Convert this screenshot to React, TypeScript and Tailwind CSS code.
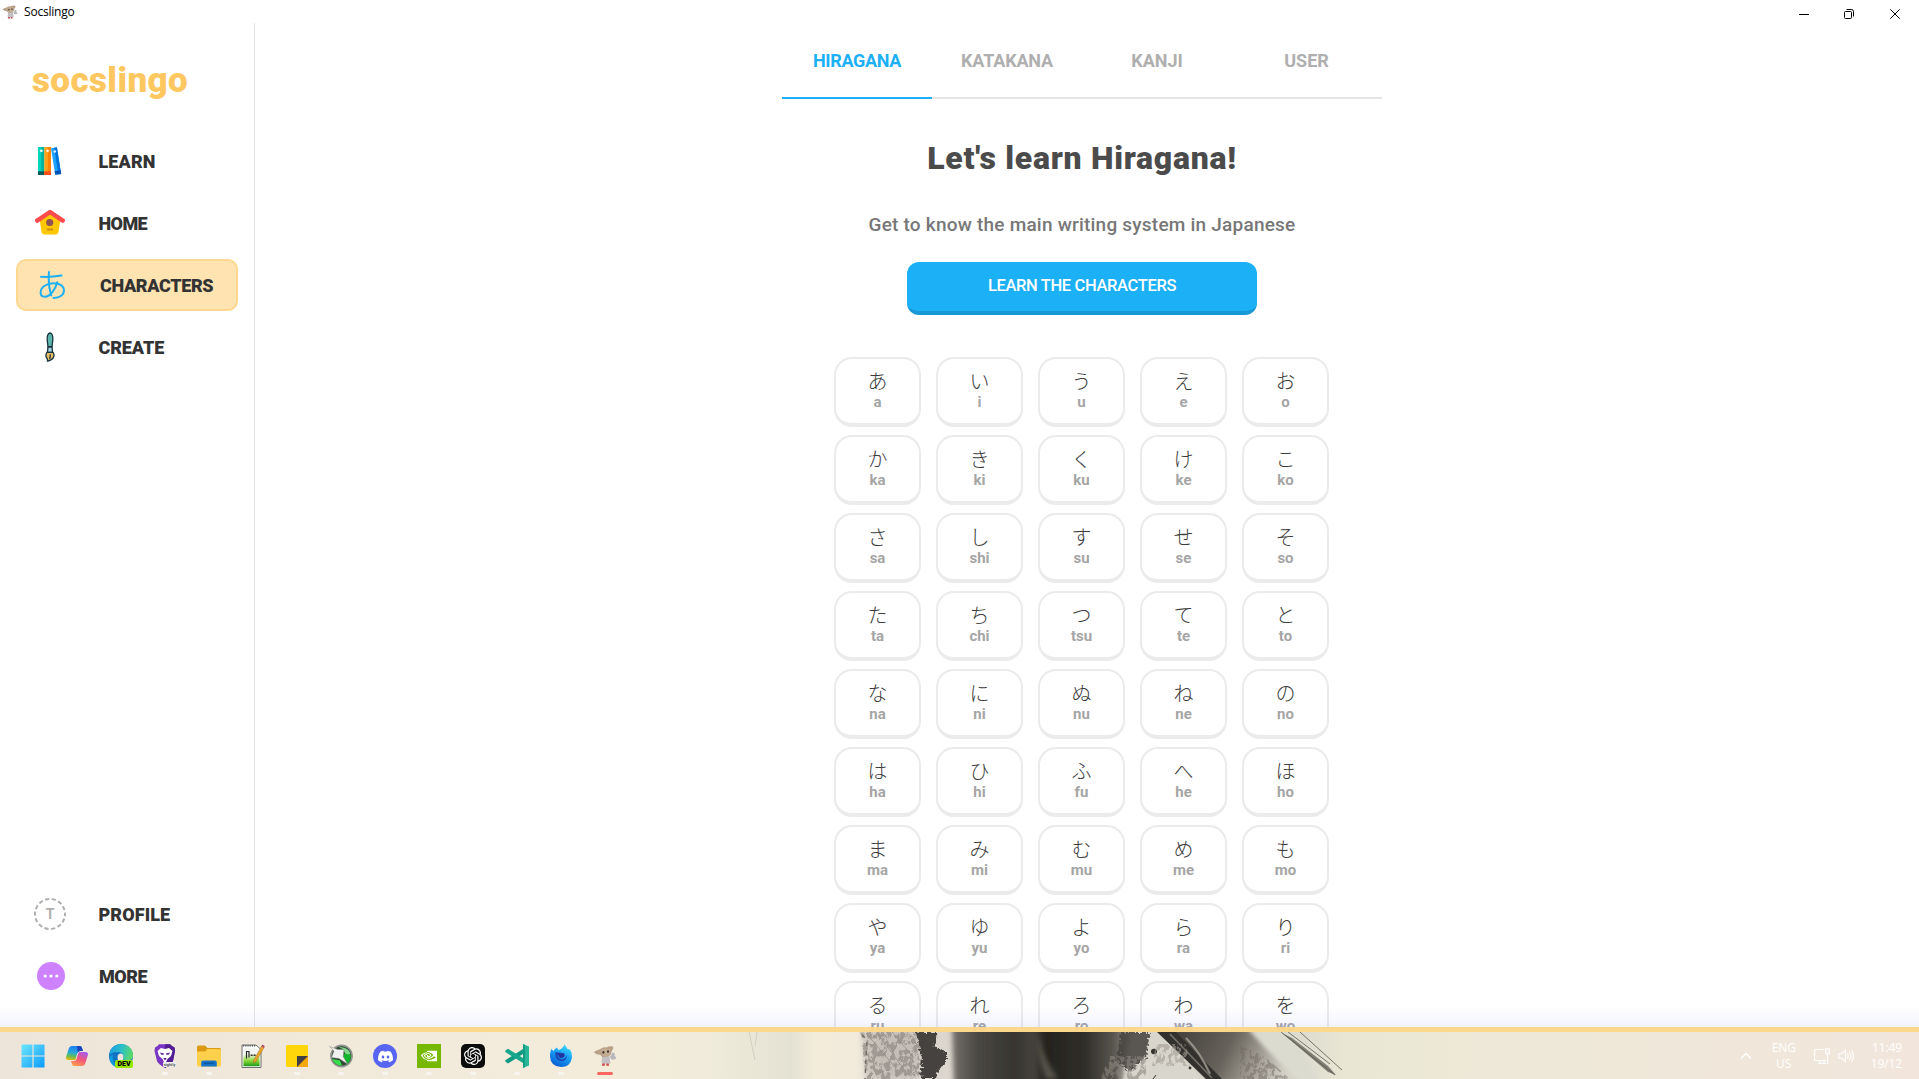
import React from "react";
import { SiDiscord, SiNvidia, SiOpenai } from "react-icons/si";

const kana: [string, string][] = [
  ["あ", "a"], ["い", "i"], ["う", "u"], ["え", "e"], ["お", "o"],
  ["か", "ka"], ["き", "ki"], ["く", "ku"], ["け", "ke"], ["こ", "ko"],
  ["さ", "sa"], ["し", "shi"], ["す", "su"], ["せ", "se"], ["そ", "so"],
  ["た", "ta"], ["ち", "chi"], ["つ", "tsu"], ["て", "te"], ["と", "to"],
  ["な", "na"], ["に", "ni"], ["ぬ", "nu"], ["ね", "ne"], ["の", "no"],
  ["は", "ha"], ["ひ", "hi"], ["ふ", "fu"], ["へ", "he"], ["ほ", "ho"],
  ["ま", "ma"], ["み", "mi"], ["む", "mu"], ["め", "me"], ["も", "mo"],
  ["や", "ya"], ["ゆ", "yu"], ["よ", "yo"], ["ら", "ra"], ["り", "ri"],
  ["る", "ru"], ["れ", "re"], ["ろ", "ro"], ["わ", "wa"], ["を", "wo"],
];

function Mascot({ className }: { className: string }) {
  return (
    <svg viewBox="0 0 24 24" className={className}>
      <path d="M9 12 L16.5 12 L17.5 19.8 L8.5 19.8Z" fill="#c2c0c2" />
      <path d="M0.8 8 Q3 6.5 7.5 5 Q9 3 13.5 3.4 Q16 1.6 20 2.6 Q21.2 4.2 19 6.5 L17.5 11 Q14 13.6 9 12.8 L7 10.6 Q3 11 0.8 8Z" fill="#b7a189" />
      <path d="M8 5.6 Q12 4 17.4 5.4 L17 10 Q13.5 12.8 9 11.6Z" fill="#c8ae90" />
      <ellipse cx="10.4" cy="8.4" rx="1" ry="1.4" fill="#34323a" />
      <ellipse cx="15" cy="7.6" rx="1" ry="1.4" fill="#34323a" />
      <path d="M17 13 L19.5 8.5 L22 9.5 L21.4 11.5 L23.4 14 L21.5 15.5 L18.5 15.5Z" fill="#b7b6bb" />
      <path d="M9.5 19.4 h2.4 v2.4 h-3.2z M13.3 19.4 h2.4 l.4 2.4 h-2.8z" fill="#d24a48" />
    </svg>
  );
}

function BooksIcon() {
  return (
    <svg viewBox="0 0 24 28" className="h-7 w-6">
      <rect x="0" y="0" width="6.3" height="28" fill="#00d6bd" />
      <rect x="3.2" y="0" width="3.1" height="28" fill="#00b3a0" />
      <rect x="0" y="24.3" width="6.3" height="3.7" fill="#045d5c" />
      <circle cx="3.4" cy="3.8" r="1.4" fill="#e8fffb" />
      <rect x="6.3" y="0" width="6.6" height="28" fill="#ffa31a" />
      <rect x="9.8" y="0" width="3.1" height="28" fill="#ff8300" />
      <rect x="6.3" y="24.3" width="6.6" height="3.7" fill="#ff4b14" />
      <circle cx="9.6" cy="3.8" r="1.4" fill="#fff1d8" />
      <g transform="translate(13 1.2) rotate(-9)">
        <rect width="6" height="27" fill="#1ea2ff" />
        <rect x="3.2" width="2.8" height="27" fill="#0074d9" />
        <rect y="23.4" width="6" height="3.6" fill="#0053b8" />
        <circle cx="3.2" cy="3.8" r="1.3" fill="#e4f4ff" />
      </g>
    </svg>
  );
}

function BirdhouseIcon() {
  return (
    <svg viewBox="0 0 30 26" className="relative -top-px h-[26px] w-[30px]">
      <path d="M4.5 9.5 L15 2.5 L25.5 9.5 L23.5 23 Q23.2 25.4 21 25.4 H9 Q6.8 25.4 6.5 23Z" fill="#ffc800" />
      <path d="M2.2 11.6 L15 3 L27.8 11.6" fill="none" stroke="#ff4b4b" strokeWidth="4.4" strokeLinecap="round" strokeLinejoin="round" />
      <circle cx="14.7" cy="13.5" r="3.6" fill="#8f5252" />
      <rect x="11.8" y="19.6" width="6.4" height="1.9" rx="0.8" fill="#cd8f15" />
    </svg>
  );
}

function AIcon() {
  return (
    <svg viewBox="0 0 26 28" className="h-7 w-[26px]" fill="none" stroke="#1cb0f6" strokeWidth="2" strokeLinecap="round">
      <path d="M2 5.8 Q12 6.3 22.5 4.6" />
      <path d="M10 1 Q8.8 14 12.3 24.5" />
      <path d="M18.2 11.3 C16.8 17 12 25.8 5.6 25.8 C2.8 25.8 1.6 24 1.6 21.6 C1.6 15.8 8 12.2 14.6 12.2 C21.5 12.2 25 15.6 25 19.2 C25 23.6 21 26.6 14.5 27" />
    </svg>
  );
}

function BrushIcon() {
  return (
    <svg viewBox="0 0 10 30" className="h-[30px] w-[10px]" stroke="#17323c" strokeWidth="1.3" strokeLinejoin="round">
      <path d="M5 0.8 Q8.2 1.5 7.8 8 L7 15 H3 L2.2 8 Q1.8 1.5 5 0.8Z" fill="#5bb5ac" />
      <path d="M3 15 H7 L7.6 20.5 H2.4Z" fill="#a8d8e8" />
      <path d="M2 20.4 H8 Q9.8 23 8.4 25.6 Q7 28 2.4 29.2 Q3 27.5 1.2 25 Q0.4 22 2 20.4Z" fill="#e5bc62" />
      <path d="M5.4 22.5 L4.8 27" fill="none" />
    </svg>
  );
}

function ProfileIcon() {
  return (
    <div className="relative flex size-8 items-center justify-center">
      <svg viewBox="0 0 32 32" className="absolute inset-0 size-8">
        <circle cx="16" cy="16" r="15" fill="none" stroke="#afafaf" strokeWidth="2" strokeDasharray="4.1 2.63" strokeDashoffset="2" />
      </svg>
      <span className="text-[14px] font-bold text-[#afafaf]">T</span>
    </div>
  );
}

function MoreIcon() {
  return (
    <svg viewBox="0 0 28 28" className="relative left-[0.5px] size-7">
      <circle cx="14" cy="14" r="14" fill="#ce82ff" />
      <g fill="#fff">
        <circle cx="8.2" cy="14" r="1.6" />
        <circle cx="14" cy="14" r="1.6" />
        <circle cx="19.8" cy="14" r="1.6" />
      </g>
    </svg>
  );
}

function NavItem({ icon, label, active, text }: { icon: React.ReactNode; label: string; active?: boolean; text: string }) {
  return (
    <div
      className={
        "flex h-[52px] w-[222px] items-center rounded-[10px] " +
        (active ? "border-2 border-[#ffd78e] bg-[#ffe3b1]" : "")
      }
    >
      <div className="flex w-[68px] justify-center">{icon}</div>
      <span className={"text-[18px] font-black text-[#333] " + text}>{label}</span>
    </div>
  );
}

function WindowControls() {
  return (
    <div className="flex items-center pr-[19px] pt-[5px]">
      <svg viewBox="0 0 10 10" className="mr-[35px] size-[10px]"><path d="M0 5.5H10" stroke="#000" /></svg>
      <svg viewBox="0 0 10 10" className="mr-9 size-[10px]" fill="none" stroke="#000">
        <rect x="0.5" y="2.5" width="7" height="7" rx="1" />
        <path d="M2.5 0.5 H7.5 Q9.5 0.5 9.5 2.5 V7.5" />
      </svg>
      <svg viewBox="0 0 10 10" className="size-[10px]"><path d="M0.3 0.3 L9.7 9.7 M9.7 0.3 L0.3 9.7" stroke="#000" /></svg>
    </div>
  );
}

function WindowsIcon() {
  return (
    <svg viewBox="0 0 24 24" className="relative -left-[0.5px] size-6">
      <defs>
        <linearGradient id="win" x1="0" y1="0" x2="1" y2="1">
          <stop offset="0" stopColor="#6fe6ff" />
          <stop offset="1" stopColor="#0a9bff" />
        </linearGradient>
      </defs>
      <path d="M0.5 0.5H11.4V11.4H0.5Z M12.6 0.5H23.5V11.4H12.6Z M0.5 12.6H11.4V23.5H0.5Z M12.6 12.6H23.5V23.5H12.6Z" fill="url(#win)" />
    </svg>
  );
}

function CopilotIcon() {
  return (
    <svg viewBox="0 0 24 24" className="size-6">
      <defs>
        <linearGradient id="cpA" x1="0.4" y1="0" x2="0.2" y2="1">
          <stop offset="0" stopColor="#1f7ff0" />
          <stop offset="0.45" stopColor="#26a8d8" />
          <stop offset="0.75" stopColor="#6cc04a" />
          <stop offset="1" stopColor="#f2b90c" />
        </linearGradient>
        <linearGradient id="cpB" x1="0.8" y1="0" x2="0.3" y2="1">
          <stop offset="0" stopColor="#a45cf5" />
          <stop offset="0.5" stopColor="#f0567c" />
          <stop offset="1" stopColor="#ff9a4a" />
        </linearGradient>
      </defs>
      <path d="M7 2 H15 Q16.5 2 17 4 L18 7 H15 Q13 7 12.3 9.5 L10.3 16 H3.5 Q0.2 16 1.2 12.5 L3.6 5 Q4.5 2 7 2Z" fill="url(#cpA)" />
      <path d="M17 22 H9 Q7.5 22 7 20 L6 17 H9 Q11 17 11.7 14.5 L13.7 8 H20.5 Q23.8 8 22.8 11.5 L20.4 19 Q19.5 22 17 22Z" fill="url(#cpB)" />
      <path d="M12 2 H15 Q16.5 2 17 4 L18 7 H15 Q13.5 7 12.7 8.6Z" fill="#1b45b8" />
    </svg>
  );
}

function EdgeIcon() {
  return (
    <div className="relative size-6">
      <svg viewBox="0 0 24 24" className="size-6">
        <defs>
          <linearGradient id="edgeTop" x1="0" y1="0.3" x2="1" y2="0.5">
            <stop offset="0" stopColor="#1b9de2" />
            <stop offset="0.5" stopColor="#2cc0c8" />
            <stop offset="1" stopColor="#5ddb62" />
          </linearGradient>
        </defs>
        <circle cx="12" cy="12" r="12" fill="#1273c4" />
        <path d="M0.2 11 C1 4 6 0 12 0 C19 0 24 5 24 11 C24 15 21 17 18 17 C15 17 13.5 16 14.3 14.4 C15.5 12 14 8.5 9.5 8 C5 7.5 1.5 9 0.2 11Z" fill="url(#edgeTop)" />
        <path d="M8.5 13 C8.5 10.5 10.5 9 12.5 9.6 C14.7 10.5 15 13 14 15 L13 20 C10.5 19 8.5 16.5 8.5 13Z" fill="#ece5da" />
        <path d="M4 10.5 Q2.5 18 9 23.5 Q3.5 22.5 1 17 Q-0.5 12 4 10.5Z" fill="#0f9bdc" />
      </svg>
      <span className="absolute top-[16px] left-[6px] flex h-2 w-[18px] items-center justify-center rounded-[2px] bg-[#99e600] text-[7px] font-black text-black">DEV</span>
    </div>
  );
}

function BraveIcon() {
  return (
    <div className="relative size-6">
      <svg viewBox="0 0 24 24" className="size-6">
        <path d="M6 0.3 H17 L19 2 L21.5 3.5 L22 7 L20 17 Q19 20 12 24 Q5 20 4 17 L1.5 7 L2 3.5 L4.5 2Z" fill="#7a35c4" />
        <path d="M12 0.3 H17 L19 2 L21.5 3.5 L22 7 L20 17 Q19 20 12 24Z" fill="#511f92" />
        <path d="M8 4 L12 5 L16 4 L19.5 7 L18 12 L14.5 15 L12 20 L9.5 15 L6 12 L4.5 7Z" fill="#fff" />
        <path d="M7 8.6 L11 9.5 L10.4 11 L8 10.6Z M17 8.6 L13 9.5 L13.6 11 L16 10.6Z M10.2 14 H13.8 L12 16.5Z" fill="#5b2499" />
      </svg>
      <span className="absolute top-[18px] left-[10px] flex h-[5px] w-[13px] items-center justify-center rounded-[1px] bg-[#eee] text-[3.8px] font-bold text-[#555]">nightly</span>
    </div>
  );
}

function FolderIcon() {
  return (
    <svg viewBox="0 0 24 24" className="size-6">
      <path d="M0 3 Q0 1.5 1.5 1.5 H8 L10.5 4 H22.5 Q24 4 24 5.5 V10 H0Z" fill="#dc9a14" />
      <path d="M0 7.5 H8 L10.5 5 H22.5 Q24 5 24 6.5 V21 Q24 22.5 22.5 22.5 H1.5 Q0 22.5 0 21Z" fill="#ffd04b" />
      <path d="M4.2 22.5 V18.5 Q4.2 16.4 6.3 16.4 H17.7 Q19.8 16.4 19.8 18.5 V22.5Z" fill="#1373c9" />
      <path d="M7 19.2 H17" stroke="#0a4f97" strokeWidth="1.2" />
    </svg>
  );
}

function NotepadIcon() {
  return (
    <svg viewBox="0 0 24 24" className="size-6">
      <defs>
        <linearGradient id="npp" x1="0" y1="0" x2="0" y2="1">
          <stop offset="0.35" stopColor="#f4f6f2" />
          <stop offset="0.7" stopColor="#8edb3a" />
          <stop offset="1" stopColor="#1f9a1a" />
        </linearGradient>
      </defs>
      <path d="M1 1 H15 L20 5.5 V23.5 H1Z" fill="#fff" stroke="#6b6f6b" />
      <path d="M2.4 3.5 H14 L18.6 7 V22.2 H2.4Z" fill="url(#npp)" />
      <path d="M2 1.8 H14.5" stroke="#555" strokeWidth="1.4" strokeDasharray="1.2 1" />
      <path d="M5.5 14.5 V7.5 H8 V13.5" fill="none" stroke="#2b2b2b" strokeWidth="1.2" />
      <path d="M9.6 11.2 H11.6 M12.6 11.2 H14.6" stroke="#2b2b2b" strokeWidth="1.4" />
      <path d="M21 1.5 L23.3 3 L15 17.5 L12.6 19 L12.8 16Z" fill="#eda72c" stroke="#9a6518" strokeWidth="0.5" />
      <path d="M20.4 2.4 L21.3 0.5 L23.7 2 L22.8 3.8Z" fill="#b3476a" />
    </svg>
  );
}

function StickyIcon() {
  return (
    <svg viewBox="0 0 24 24" className="size-6">
      <rect x="1" y="1" width="22" height="22" rx="1.2" fill="#ffd60a" />
      <path d="M12 12 H23 V21.8 Q23 23 21.8 23 H12Z" fill="#f5a70b" />
      <path d="M12 12 H23 L12 23Z" fill="#3f3f44" />
    </svg>
  );
}

function JetIcon() {
  return (
    <svg viewBox="0 0 24 24" className="size-6">
      <circle cx="12.5" cy="12" r="10.6" fill="#2f4a34" stroke="#90948f" strokeWidth="1.6" />
      <path d="M10 3.4 Q19 2.5 21.6 10 L17.5 12 L14 5Z" fill="#7fd98c" />
      <path d="M15.5 9.5 L22 11 Q22 17 18 20 L14 12Z" fill="#12b52c" />
      <path d="M3.2 15 Q6 21.5 13 21.6 L11 16.4Z" fill="#35e04c" />
      <path d="M0.5 2.5 L5 7 L2.5 13.5 L10 14.5 L18.5 20 L14.2 12.5 L15 5.5 L9 5.5Z" fill="#f1f1ef" stroke="#84857f" strokeWidth="0.5" />
    </svg>
  );
}

function DiscordIcon() {
  return (
    <div className="flex size-6 items-center justify-center rounded-full bg-[#5865f2]">
      <SiDiscord className="size-[15px] text-white" />
    </div>
  );
}

function NvidiaIcon() {
  return (
    <div className="flex size-6 items-center justify-center bg-[#76b900]">
      <SiNvidia className="size-4 text-white" />
    </div>
  );
}

function ChatIcon() {
  return (
    <div className="flex size-6 items-center justify-center rounded-[5px] bg-[#0c0c0d]">
      <SiOpenai className="size-[18px] text-white" />
    </div>
  );
}

function CodeIcon() {
  return (
    <svg viewBox="0 0 24 24" className="size-6">
      <path d="M18 0 L24 2.6 V21.4 L18 24Z" fill="#27b798" />
      <path d="M18 0 L20 1 V23 L18 24Z" fill="#109d84" />
      <path d="M18 5 V10 L3 19.5 L0.3 17.6 V16.2Z" fill="#0f9b83" />
      <path d="M18 19 V14 L3 4.7 L0.3 6.6 V8Z" fill="#16a78d" />
    </svg>
  );
}

function FirefoxIcon() {
  return (
    <svg viewBox="0 0 24 24" className="size-6">
      <defs>
        <linearGradient id="fx" x1="0.8" y1="0" x2="0.3" y2="1">
          <stop offset="0" stopColor="#3fe0ff" />
          <stop offset="0.5" stopColor="#159cf5" />
          <stop offset="1" stopColor="#0a5bd0" />
        </linearGradient>
      </defs>
      <path d="M1 10 L2.2 5 L4.6 7 Q5.6 4.5 8 3.5 L9.5 6 Q13 5 14 3 L15.5 0.4 Q17.5 3 18.5 5 L21 5.5 Q23.5 9 23 13.5 Q21.5 23 12 23 Q1.5 22.5 1 12.5Z" fill="url(#fx)" />
      <path d="M6.5 8 Q9 9 12.5 8.6 Q11 10.5 8.6 11.5 Q9.5 15 13 15.2 Q17 15 17.5 10.8 Q18.6 14.5 15 16.8 Q10 18 7.4 14.5 Q5.4 11.6 6.5 8Z" fill="#1c48b4" />
      <path d="M8 8.6 Q11 9.6 14.5 9 Q16.5 10.8 15.4 12.6 Q13 15 10.5 13.4Z" fill="#2233a0" />
    </svg>
  );
}

const apps: { icon: React.ReactNode; mark: "none" | "open" | "active" }[] = [
  { icon: <WindowsIcon />, mark: "none" },
  { icon: <CopilotIcon />, mark: "none" },
  { icon: <EdgeIcon />, mark: "none" },
  { icon: <BraveIcon />, mark: "open" },
  { icon: <FolderIcon />, mark: "open" },
  { icon: <NotepadIcon />, mark: "none" },
  { icon: <StickyIcon />, mark: "open" },
  { icon: <JetIcon />, mark: "open" },
  { icon: <DiscordIcon />, mark: "open" },
  { icon: <NvidiaIcon />, mark: "open" },
  { icon: <ChatIcon />, mark: "open" },
  { icon: <CodeIcon />, mark: "open" },
  { icon: <FirefoxIcon />, mark: "open" },
  { icon: <Mascot className="size-6" />, mark: "active" },
];

const markClass = {
  none: "h-[3px] w-[6px]",
  open: "h-[3px] w-[6px] rounded-full bg-[#f8f5f0]",
  active: "h-[3px] w-4 rounded-full bg-[#fa6560]",
};

// Ink-wash wallpaper showing through the translucent taskbar.
function Wallpaper() {
  return (
    <svg viewBox="0 0 800 47" className="absolute top-0 left-[600px] h-[47px] w-[800px]" preserveAspectRatio="none">
      <defs>
        <filter id="rough" x="-20%" y="-20%" width="140%" height="140%">
          <feTurbulence type="fractalNoise" baseFrequency="0.35" numOctaves="3" seed="7" />
          <feDisplacementMap in="SourceGraphic" scale="9" xChannelSelector="R" yChannelSelector="G" />
        </filter>
        <filter id="speckle" x="0" y="0" width="100%" height="100%">
          <feTurbulence type="fractalNoise" baseFrequency="0.22 0.16" numOctaves="4" seed="11" result="n" />
          <feColorMatrix in="n" type="matrix" values="0 0 0 0 0  0 0 0 0 0  0 0 0 0 0  0 0 0 -9 4.9" result="m" />
          <feComposite in="SourceGraphic" in2="m" operator="in" />
        </filter>
        <filter id="soft"><feGaussianBlur stdDeviation="2.5" /></filter>
        <linearGradient id="wash" x1="0" x2="1" y1="0" y2="0">
          <stop offset="0" stopColor="#f3ecdb" stopOpacity="0" />
          <stop offset="0.14" stopColor="#efebdb" />
          <stop offset="0.24" stopColor="#e4e2d3" />
          <stop offset="0.27" stopColor="#f3ecdb" />
          <stop offset="0.32" stopColor="#f2ebdc" />
          <stop offset="0.35" stopColor="#dcd6ce" />
          <stop offset="0.7" stopColor="#d8d5cc" />
          <stop offset="0.88" stopColor="#dddccf" />
          <stop offset="0.93" stopColor="#e9e6d3" />
          <stop offset="1" stopColor="#ece8d6" />
        </linearGradient>
        <linearGradient id="ink" x1="0" x2="1" y1="0" y2="0">
          <stop offset="0" stopColor="#77736d" />
          <stop offset="0.14" stopColor="#4a4843" />
          <stop offset="0.35" stopColor="#36342f" />
          <stop offset="0.45" stopColor="#46443d" />
          <stop offset="0.52" stopColor="#24221e" />
          <stop offset="0.74" stopColor="#302e2a" />
          <stop offset="0.9" stopColor="#5a5750" />
          <stop offset="1" stopColor="#99958c" />
        </linearGradient>
        <linearGradient id="veil" x1="0" x2="1" y1="0" y2="0.2">
          <stop offset="0" stopColor="#3b3935" />
          <stop offset="0.5" stopColor="#66625a" />
          <stop offset="0.75" stopColor="#a29d94" />
          <stop offset="1" stopColor="#d5d2c8" />
        </linearGradient>
      </defs>
      <rect width="800" height="47" fill="url(#wash)" />
      <path d="M149 0 L155 28 M155 14 L157 0" stroke="#cfcfc2" fill="none" />
      <path d="M262 0 H322 L318 47 H266Z" fill="#aaa39c" opacity="0.45" filter="url(#soft)" />
      <path d="M260 0 H322 V47 H266Z" fill="#77736d" opacity="0.5" filter="url(#speckle)" />
      <path d="M266 1 L294 34 M278 2 L306 40 M292 0 L314 26" stroke="#8a867f" strokeWidth="0.9" opacity="0.7" />
      <path d="M316 0 H338 L334 14 L346 20 L346 32 L338 38 L336 47 H320 L322 26Z" fill="#45433f" filter="url(#rough)" />
      <path d="M262 3 L267 8 L265 47" stroke="#6c6a65" strokeWidth="1.4" strokeDasharray="4 5" fill="none" />
      <path d="M352 -6 H532 L520 55 H354Z" fill="url(#ink)" filter="url(#soft)" />
      <path d="M438 4 Q444 28 458 47 L446 47 Q436 20 438 4Z" fill="#57554c" filter="url(#soft)" />
      <path d="M520 0 H550 L546 24 L530 40 L518 30Z" fill="#45423d" opacity="0.85" filter="url(#rough)" />
      <path d="M510 24 H546 V47 H500Z" fill="#8d877f" opacity="0.6" filter="url(#speckle)" />
      <path d="M566 -4 L650 -4 Q672 24 704 51 H612Z" fill="url(#veil)" filter="url(#soft)" />
      <path d="M648 -4 L690 -4 L722 51 H702 Q674 24 648 -4Z" fill="#dcdbd0" filter="url(#soft)" />
      <path d="M640 14 L664 24 L690 47 L640 47Z" fill="#6f6a63" opacity="0.5" filter="url(#speckle)" />
      <path d="M557 0 H576 L622 47 H606Z" fill="#33312d" />
      <path d="M586 6 Q600 20 610 42" stroke="#aaa69c" strokeWidth="2.2" fill="none" opacity="0.75" />
      <path d="M570 2 L612 46" stroke="#716e65" strokeWidth="1.8" />
      <ellipse cx="554" cy="19.5" rx="3" ry="2.8" fill="#34322e" />
      <circle cx="590" cy="36" r="1.4" fill="#34322e" />
      <path d="M556 12 H586 L590 34 H552Z" fill="#a19c94" opacity="0.6" filter="url(#speckle)" />
      <path d="M553 47 L556 43" stroke="#34322e" />
      <path d="M681 0 L735 43 M688 0 L730 32 M700 0 L742 38" stroke="#77756a" strokeWidth="1" fill="none" />
      <path d="M682 1 L692 6 L728 34 L736 43 L728 40Z" fill="#57554d" opacity="0.7" />
    </svg>
  );
}

function Tray() {
  return (
    <div className="relative flex h-[47px] items-center pt-px pr-[17px] font-['Open_Sans',sans-serif] text-[12px] leading-4 text-white">
      <svg viewBox="0 0 12 8" className="mr-[20px] h-2 w-3"><path d="M1 6.5 L6 1.5 L11 6.5" stroke="#fff" strokeWidth="1.4" fill="none" /></svg>
      <div className="mr-[18px] w-[24px] text-center">
        <div>ENG</div>
        <div>US</div>
      </div>
      <svg viewBox="0 0 16 17" className="mr-[8px] h-[17px] w-4" fill="none" stroke="#fff" strokeWidth="1.1">
        <path d="M10.5 1.5 H1.8 Q0.6 1.5 0.6 2.7 V11.4 Q0.6 12.6 1.8 12.6 H12 M4 15.5 H12 M6 13 V15 M10 13 V15" />
        <path d="M11.8 0.8 H15.4 V5.6 H11.8Z M13.6 5.6 V16 M12.8 2.6 V3.6 M14.4 2.6 V3.6" />
      </svg>
      <svg viewBox="0 0 17 14" className="mr-[16px] h-[14px] w-[17px]" fill="none" stroke="#fff" strokeWidth="1.1" strokeLinecap="round" strokeLinejoin="round">
        <path d="M0.7 4.8 H3.4 L7.4 1.2 V12.8 L3.4 9.2 H0.7Z" />
        <path d="M9.5 5 Q10.7 7 9.5 9 M11.6 3.2 Q14 7 11.6 10.8 M13.6 1.5 Q17.4 7 13.6 12.5" />
      </svg>
      <div className="-mt-px text-right tracking-[-0.1px]">
        <div>11:49</div>
        <div>19/12</div>
      </div>
    </div>
  );
}

const tabs = [
  { label: "HIRAGANA", spacing: "tracking-[-0.35px]" },
  { label: "KATAKANA", spacing: "tracking-[-0.15px]" },
  { label: "KANJI", spacing: "tracking-[0px]" },
  { label: "USER", spacing: "tracking-[0px] pr-px" },
];

export default function App() {
  return (
    <div className="flex h-[1079px] w-[1919px] flex-col overflow-hidden bg-white font-['Roboto','Noto_Sans_CJK_JP',sans-serif]">
      <header className="flex h-[23px] shrink-0 items-center justify-between">
        <div className="flex items-center gap-[6px] pl-[2px]">
          <Mascot className="size-4" />
          <span className="font-['Open_Sans',sans-serif] text-[12px] tracking-[-0.2px] text-black">Socslingo</span>
        </div>
        <WindowControls />
      </header>

      <div className="relative flex h-[1009px] shrink-0 overflow-hidden">
        <aside className="flex w-[255px] shrink-0 flex-col border-r border-[#e5e5e5] pl-4">
          <div className="h-[112px] pt-[32px] pl-4 text-[35px] leading-[52px] font-black tracking-[0.4px] text-[#ffc75f]">
            socslingo
          </div>
          <nav className="flex flex-col gap-[10px]">
            <NavItem icon={<BooksIcon />} label="LEARN" text="pl-[14.5px] tracking-[0.1px]" />
            <NavItem icon={<BirdhouseIcon />} label="HOME" text="pl-[14.5px] tracking-[-0.6px]" />
            <NavItem icon={<AIcon />} label="CHARACTERS" active text="pl-[14px] tracking-[-0.35px]" />
            <NavItem icon={<BrushIcon />} label="CREATE" text="pl-[14.5px] tracking-[-0.1px]" />
          </nav>
          <div className="mt-auto mb-[30px] flex flex-col gap-[10px]">
            <NavItem icon={<ProfileIcon />} label="PROFILE" text="pl-[14.5px] tracking-[0.1px]" />
            <NavItem icon={<MoreIcon />} label="MORE" text="pl-[15px] tracking-[-0.5px]" />
          </div>
        </aside>

        <main className="flex h-[1400px] w-[1654px] flex-col items-center">
          <div className="flex h-[76px] w-[600px] shrink-0">
            {tabs.map((t, i) => (
              <div
                key={t.label}
                className={
                  "flex w-[150px] justify-center border-b-2 pt-[26px] text-[18px] leading-6 font-bold " +
                  t.spacing +
                  (i === 0 ? " border-[#1cb0f6] text-[#1cb0f6]" : " border-[#e5e5e5] text-[#afafaf]")
                }
              >
                {t.label}
              </div>
            ))}
          </div>
          <h1 className="mt-[39px] h-10 text-[32px] leading-10 font-black tracking-[0.72px] text-[#4b4b4b]">Let's learn Hiragana!</h1>
          <p className="mt-[35px] text-[19px] leading-6 font-medium tracking-[0.22px] text-[#777]">
            Get to know the main writing system in Japanese
          </p>
          <button className="mt-[25px] flex h-[53px] w-[350px] shrink-0 justify-center rounded-xl border-b-4 border-[#1899d6] bg-[#1cb0f6] pt-[12px] text-[16.5px] leading-6 font-medium tracking-[-0.35px] text-white">
            LEARN THE CHARACTERS
          </button>
          <div className="mt-[42px] mr-px grid grid-cols-[repeat(5,87px)] gap-x-[15px] gap-y-2">
            {kana.map(([k, r]) => (
              <div key={r} className="flex h-[70px] flex-col items-center rounded-[18px] border-2 border-b-4 border-[#ebebeb] pt-[10px]">
                <span className="font-['Noto_Sans_CJK_JP',sans-serif] text-[20px] leading-6 font-light text-[#3c3c3c]">{k}</span>
                <span className="pt-px text-[15px] leading-4 font-bold text-[#a5a5a5]">{r}</span>
              </div>
            ))}
          </div>
        </main>

        <div className="absolute inset-x-0 bottom-0">
          <div className="h-5 bg-linear-to-b from-[#8080ff]/0 to-[#8080ff]/10" />
          <div className="h-[5px] bg-[#ffd587]/95" />
        </div>
      </div>

      <footer className="relative flex h-[47px] shrink-0 items-center justify-between bg-linear-to-r from-[#ede5d9] via-[#f4ecdb] via-32% to-[#f2e6dc]">
        <div className="absolute inset-y-0 right-0 w-[560px] bg-linear-to-r from-[#ebe8d5] to-[#f2e6dc]" />
        <Wallpaper />
        <div className="relative flex gap-5 pl-[21px]">
          {apps.map((a, i) => (
            <div key={i} className="flex h-[47px] w-6 flex-col items-center pt-3">
              {a.icon}
              <div className="h-1" />
              <div className={"shrink-0 " + markClass[a.mark]} />
            </div>
          ))}
        </div>
        <Tray />
      </footer>
    </div>
  );
}
